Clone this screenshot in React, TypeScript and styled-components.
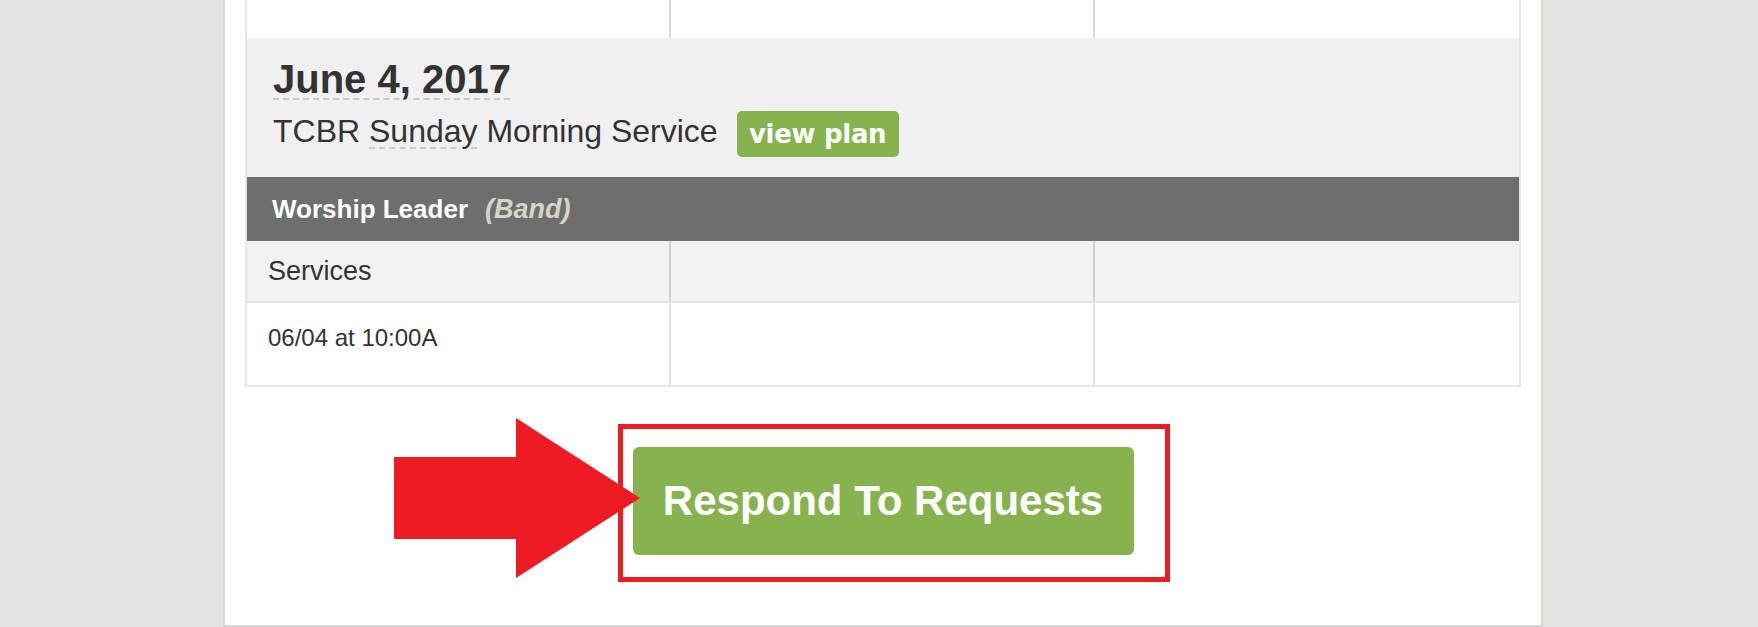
import React from "react";
import styled, { createGlobalStyle } from "styled-components";

const GlobalStyle = createGlobalStyle`
  html, body {
    margin: 0;
    padding: 0;
    background-color: #e3e4df;
    font-family: "Liberation Sans", Arial, sans-serif;
    overflow: hidden;
  }
`;

const Page = styled.div`
  min-height: 627px;
  padding-left: 223px;
`;

const Panel = styled.div`
  box-sizing: border-box;
  width: 1320px;
  background-color: #ffffff;
  border: 2px solid #d7d8d3;
  border-top: none;
  padding: 0 20px 70px;
`;

const Table = styled.div`
  border: 2px solid #e6e6e6;
  border-top: none;
`;

const Row = styled.div<{ $bg?: string; $height: number; $line?: string }>`
  display: grid;
  grid-template-columns: 1fr 1fr 1fr;
  height: ${(p) => p.$height}px;
  background-color: ${(p) => p.$bg || "#ffffff"};
  border-bottom: ${(p) => (p.$line ? `2px solid ${p.$line}` : "none")};
`;

const Cell = styled.div<{ $divider: string }>`
  border-right: 2px solid ${(p) => p.$divider};
  padding-left: 21px;
  color: #333333;

  &:last-child {
    border-right: none;
  }
`;

const LabelCell = styled(Cell)`
  font-size: 27px;
  line-height: 60px;
`;

const TimeCell = styled(Cell)`
  font-size: 24px;
  line-height: 28px;
  padding-top: 21px;
`;

const DateSection = styled.div`
  background-color: #f0f0f0;
  padding: 18px 26px 20px;
  color: #333333;
`;

const Dotted = styled.span`
  text-decoration: underline dashed #c9c9c9;
  text-decoration-thickness: 2px;
  text-underline-offset: 5px;
`;

const DateTitle = styled.div`
  font-size: 40px;
  font-weight: bold;
  line-height: 46px;
`;

const ServiceLine = styled.div`
  display: flex;
  align-items: flex-start;
  gap: 19px;
  margin-top: 9px;
`;

const ServiceName = styled.span`
  font-size: 32px;
  line-height: 40px;
  white-space: nowrap;
`;

const ViewPlan = styled.button`
  height: 46px;
  width: 162px;
  border: none;
  border-radius: 5px;
  background-color: #86b350;
  color: #ffffff;
  font-family: "DejaVu Sans", sans-serif;
  font-weight: bold;
  font-size: 26px;
  letter-spacing: -0.3px;
  padding: 0;
  cursor: pointer;
`;

const TeamBar = styled.div`
  height: 64px;
  background-color: #6e6e6e;
  padding-left: 25px;
  font-size: 26px;
  font-weight: bold;
  line-height: 64px;
  color: #ffffff;
  white-space: nowrap;
`;

const Team = styled.span`
  margin-left: 17px;
  font-style: italic;
  font-size: 27px;
  color: #d2d6c6;
`;

const ActionArea = styled.div`
  display: flex;
  justify-content: center;
  margin-top: 60px;
`;

const ActionWrap = styled.div`
  position: relative;
`;

const RespondButton = styled.button`
  display: block;
  width: 501px;
  height: 108px;
  border: none;
  border-radius: 6px;
  background-color: #86b350;
  color: #ffffff;
  font-family: "Liberation Sans", Arial, sans-serif;
  font-size: 42px;
  font-weight: bold;
  cursor: pointer;
`;

const Highlight = styled.div`
  position: absolute;
  left: -15px;
  top: -23px;
  width: 552px;
  height: 158px;
  box-sizing: border-box;
  border: 5px solid #ed1c24;
  pointer-events: none;
`;

const Arrow = styled.svg`
  position: absolute;
  left: -239px;
  top: -29px;
`;

const columns = [0, 1, 2];

export default function App() {
  return (
    <>
      <GlobalStyle />
      <Page>
        <Panel>
          <Table>
            <Row $height={38}>
              {columns.map((c) => (
                <Cell key={c} $divider="#dcdcdc" />
              ))}
            </Row>
            <DateSection>
              <DateTitle>
                <Dotted>June 4, 2017</Dotted>
              </DateTitle>
              <ServiceLine>
                <ServiceName>
                  TCBR <Dotted>Sunday</Dotted> Morning Service
                </ServiceName>
                <ViewPlan>view plan</ViewPlan>
              </ServiceLine>
            </DateSection>
            <TeamBar>
              Worship Leader<Team>(Band)</Team>
            </TeamBar>
            <Row $height={60} $bg="#f2f2f2" $line="#e3e3e3">
              <LabelCell $divider="#d0d0d0">Services</LabelCell>
              <LabelCell $divider="#d0d0d0" />
              <LabelCell $divider="#d0d0d0" />
            </Row>
            <Row $height={82}>
              <TimeCell $divider="#e3e3e3">06/04 at 10:00A</TimeCell>
              <TimeCell $divider="#e3e3e3" />
              <TimeCell $divider="#e3e3e3" />
            </Row>
          </Table>
          <ActionArea>
            <ActionWrap>
              <RespondButton>Respond To Requests</RespondButton>
              <Highlight />
              <Arrow width="246" height="160" viewBox="0 0 246 160">
                <path d="M0 39 H122 V0 L246 80 L122 160 V121 H0 Z" fill="#ed1c24" />
              </Arrow>
            </ActionWrap>
          </ActionArea>
        </Panel>
      </Page>
    </>
  );
}
